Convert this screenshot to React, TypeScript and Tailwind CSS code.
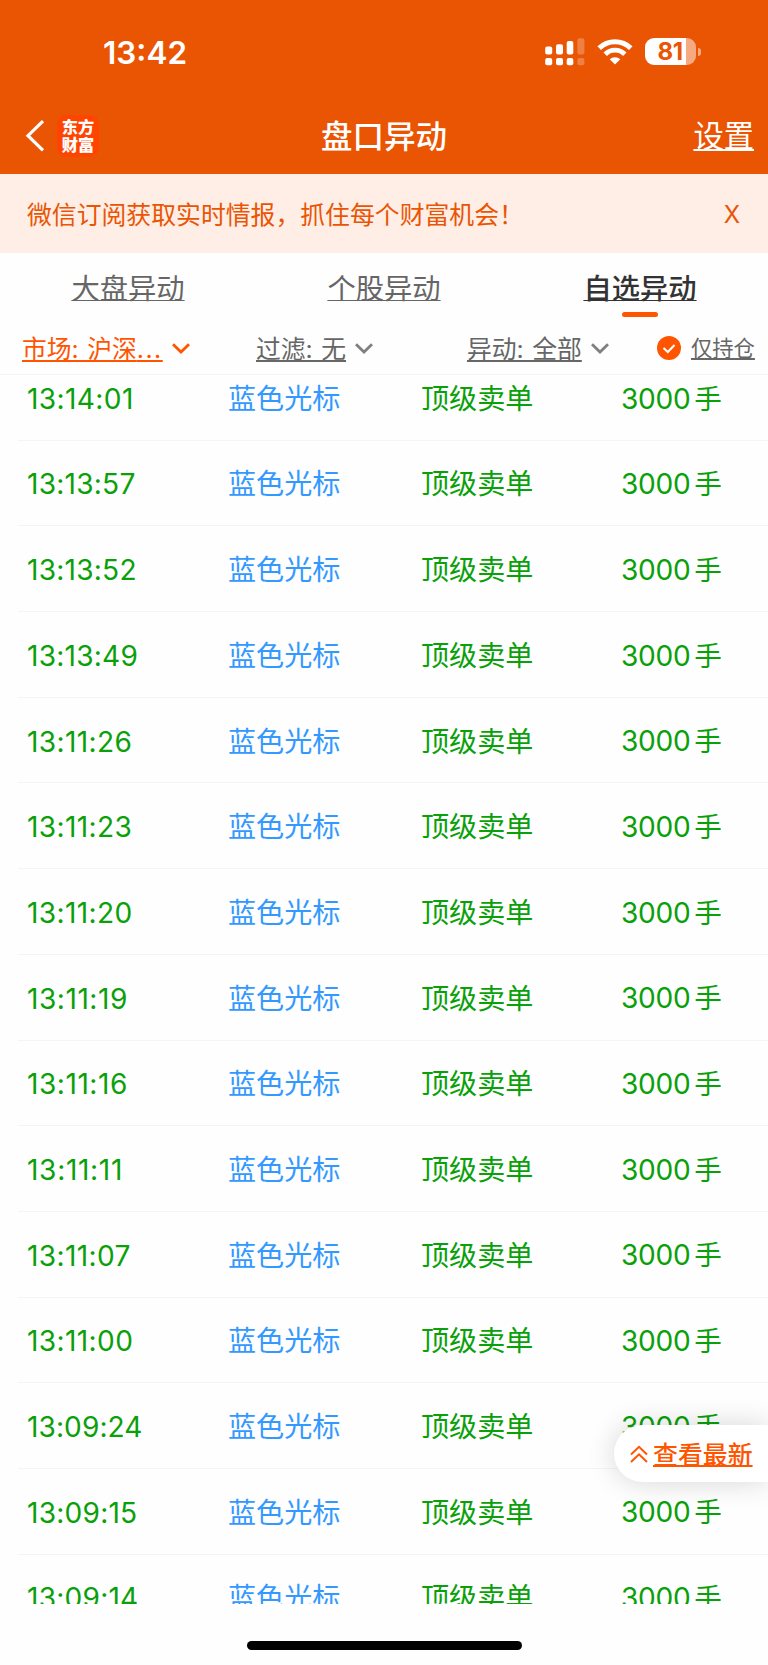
import clsx from 'clsx'

interface Tab {
  label: string
  active?: boolean
}

interface Filter {
  label: string
  /** Rendered after the label with wide dots when the value is truncated. */
  truncated?: boolean
  /** Column width, the filters are not evenly spread. */
  className: string
  active?: boolean
}

const TABS: Tab[] = [
  { label: '大盘异动' },
  { label: '个股异动' },
  { label: '自选异动', active: true },
]

const FILTERS: Filter[] = [
  { label: '市场: 沪深', truncated: true, className: 'w-[234px]', active: true },
  { label: '过滤: 无', className: 'w-[211px]' },
  { label: '异动: 全部', className: 'w-[190px]' },
]

const TIMES = [
  '13:14:01',
  '13:13:57',
  '13:13:52',
  '13:13:49',
  '13:11:26',
  '13:11:23',
  '13:11:20',
  '13:11:19',
  '13:11:16',
  '13:11:11',
  '13:11:07',
  '13:11:00',
  '13:09:24',
  '13:09:15',
  '13:09:14',
]

// Inter's "1" is narrow, so times with many of them get a little extra tracking.
function timeSpacing(time: string) {
  const ones = time.split('1').length - 1
  return `${Math.max(0, ones - 0.5) * 0.15}px`
}

export default function App() {
  return (
    <div className="relative flex h-[1665px] w-[768px] flex-col overflow-hidden bg-[#fefefe] font-['Inter','Noto_Sans_CJK_SC',sans-serif]">
      <header className="h-[174px] shrink-0 bg-[#ea5504] text-white">
        <StatusBar />
        <NavBar />
      </header>
      <Notice />
      <Tabs />
      <Filters />
      <main className="h-[1229px] shrink-0 overflow-hidden">
        <ul className="-mt-[20px]">
          {TIMES.map((time) => (
            <Row key={time} time={time} />
          ))}
        </ul>
      </main>
      <LatestButton />
      <div className="mx-auto mt-[37px] h-[9px] w-[275px] shrink-0 rounded-full bg-black" />
    </div>
  )
}

function StatusBar() {
  return (
    <div className="flex h-[98px] items-center pl-[103px] pr-[67px] pt-[5px]">
      <span className="pt-[3px] text-[31.5px] font-semibold leading-none">13:42</span>
      <SignalIcon />
      <WifiIcon />
      <Battery />
    </div>
  )
}

function SignalIcon() {
  return (
    <svg width="40" height="28" viewBox="0 0 40 28" fill="currentColor" className="ml-auto">
      <rect x="0.2" y="8.5" width="7" height="8" rx="2" />
      <rect x="11" y="6.2" width="7" height="10.3" rx="2" />
      <rect x="21.7" y="3" width="6.6" height="13.5" rx="2" />
      <rect x="32.4" y="0.2" width="7" height="16.3" rx="2" opacity="0.25" />
      <rect x="0.2" y="20" width="7" height="7.3" rx="2" />
      <rect x="11" y="20" width="7" height="7.3" rx="2" />
      <rect x="21.7" y="20" width="6.6" height="7.3" rx="2" />
      <rect x="32.4" y="20" width="7" height="7.3" rx="2" opacity="0.25" />
    </svg>
  )
}

function WifiIcon() {
  return (
    <svg width="36" height="26" viewBox="0 0 36 26" fill="none" stroke="currentColor" className="ml-[12px]">
      <path d="M2.2 9.1a22.6 22.6 0 0 1 31.6 0" strokeWidth="5" />
      <path d="M8.2 15.2a13.8 13.8 0 0 1 19.6 0" strokeWidth="4.8" />
      <path d="M18 25.6l-5.3-5.3a7.6 7.6 0 0 1 10.6 0z" fill="currentColor" stroke="none" />
    </svg>
  )
}

function Battery() {
  return (
    <div className="ml-[12px] flex items-center">
      <div className="flex h-[27px] w-[51px] items-center justify-center overflow-hidden rounded-[9px] bg-[linear-gradient(to_right,#fff_41px,#f5aa82_41px)] pr-[1px]">
        <span className="pt-[1px] text-[24px] font-bold leading-none tracking-[-0.4px] text-[#ea5504]">81</span>
      </div>
      <div className="ml-[2px] h-[8px] w-[3px] rounded-r-full bg-[#f5aa82]" />
    </div>
  )
}

function NavBar() {
  return (
    <nav className="grid h-[76px] grid-cols-3 items-center">
      <div className="flex items-center pl-[25px]">
        <svg width="20" height="32" viewBox="0 0 20 32" fill="none" stroke="currentColor" strokeWidth="3.2">
          <path d="M18 1.2L3 15.7L18 30.4" />
        </svg>
        <div className="ml-[12px] flex h-[42px] w-[42px] flex-col items-center justify-center rounded-[9px] bg-[#ff4400] text-[16.2px] font-black leading-[18px]">
          <span>东方</span>
          <span>财富</span>
        </div>
      </div>
      <h1 className="pt-[1px] text-center text-[31.5px] font-medium leading-none">盘口异动</h1>
      <a className="justify-self-end pr-[14px] text-[30.3px] leading-none">
        <span className="underline decoration-2 underline-offset-[2px]">设置</span>
      </a>
    </nav>
  )
}

function Notice() {
  return (
    <div className="flex h-[79px] shrink-0 items-center justify-between bg-[#feeee6] pl-[27px] pr-[28px] pt-[3px] text-[24.85px] leading-none text-[#ea5504]">
      <span>微信订阅获取实时情报，抓住每个财富机会！</span>
      <span className="text-[24px]">X</span>
    </div>
  )
}

function Tabs() {
  return (
    <div className="grid h-[66px] shrink-0 grid-cols-3">
      {TABS.map(({ label, active }) => (
        <div key={label} className="flex flex-col items-center pt-[21px]">
          <span
            className={clsx(
              'text-[28.3px] leading-[30px] underline decoration-1 underline-offset-[1px]',
              active ? 'font-medium text-[#333]' : 'text-[#666]',
            )}
          >
            {label}
          </span>
          {active && <span className="mt-[8px] h-[5px] w-[36px] rounded-full bg-[#ff5500]" />}
        </div>
      ))}
    </div>
  )
}

function Filters() {
  return (
    <div className="flex h-[56px] shrink-0 items-center border-b border-[#f4f4f4] pl-[22px] text-[#666]">
      {FILTERS.map(({ label, truncated, className, active }) => (
        <div key={label} className={clsx('flex items-center', className, active && 'text-[#ff5500]')}>
          <span className="pt-[5px] text-[24.8px] leading-none [word-spacing:1.5px] underline decoration-[1.5px] underline-offset-[2px]">
            {label}
            {truncated && <span className="tracking-[1.5px]">...</span>}
          </span>
          <svg
            width="18"
            height="11"
            viewBox="0 0 18 11"
            fill="none"
            stroke="currentColor"
            strokeWidth="2.8"
            className={clsx('ml-[9px] mt-[4px]', !active && 'text-[#808080]')}
          >
            <path d="M1 1.2L9 9L17 1.2" />
          </svg>
        </div>
      ))}
      <svg width="24" height="24" viewBox="0 0 24 24" fill="none" className="mt-[2px]">
        <circle cx="12" cy="12" r="12" fill="#ff5500" />
        <path d="M6.5 12L10.8 16L17.5 9" stroke="white" strokeWidth="2" />
      </svg>
      <span className="ml-[10px] pt-[4px] text-[21.3px] leading-none underline decoration-[1.5px] underline-offset-[2px]">
        仅持仓
      </span>
    </div>
  )
}

function Row({ time }: { time: string }) {
  return (
    <li className="ml-[18px] flex h-[85.7px] items-center border-b border-[#f4f4f4] pt-[3px] text-[28.1px] leading-none text-[#0aa00a]">
      <span className="w-[210px] pl-[9px]" style={{ letterSpacing: timeSpacing(time) }}>
        {time}
      </span>
      <span className="w-[193px] text-[#3399ff]">蓝色光标</span>
      <span className="w-[200px]">顶级卖单</span>
      <span>
        <span className="tracking-[-0.3px]">3000</span>
        <span className="ml-[4px] text-[27.6px]">手</span>
      </span>
    </li>
  )
}

function LatestButton() {
  return (
    <button
      type="button"
      className="absolute right-0 top-[1425px] flex h-[57px] w-[154px] items-center rounded-l-full bg-white pl-[16px] text-[#ff5500] shadow-[0_0_28px_rgba(0,0,0,0.16)]"
    >
      <svg width="18" height="18" viewBox="0 0 18 18" fill="none" stroke="currentColor" strokeWidth="2">
        <path d="M1 9.5L9 1.8L17 9.5M1 17L9 9.3L17 17" />
      </svg>
      <span className="ml-[5px] pt-[3px] text-[24.9px] font-medium leading-none underline decoration-2 underline-offset-[1px]">
        查看最新
      </span>
    </button>
  )
}
